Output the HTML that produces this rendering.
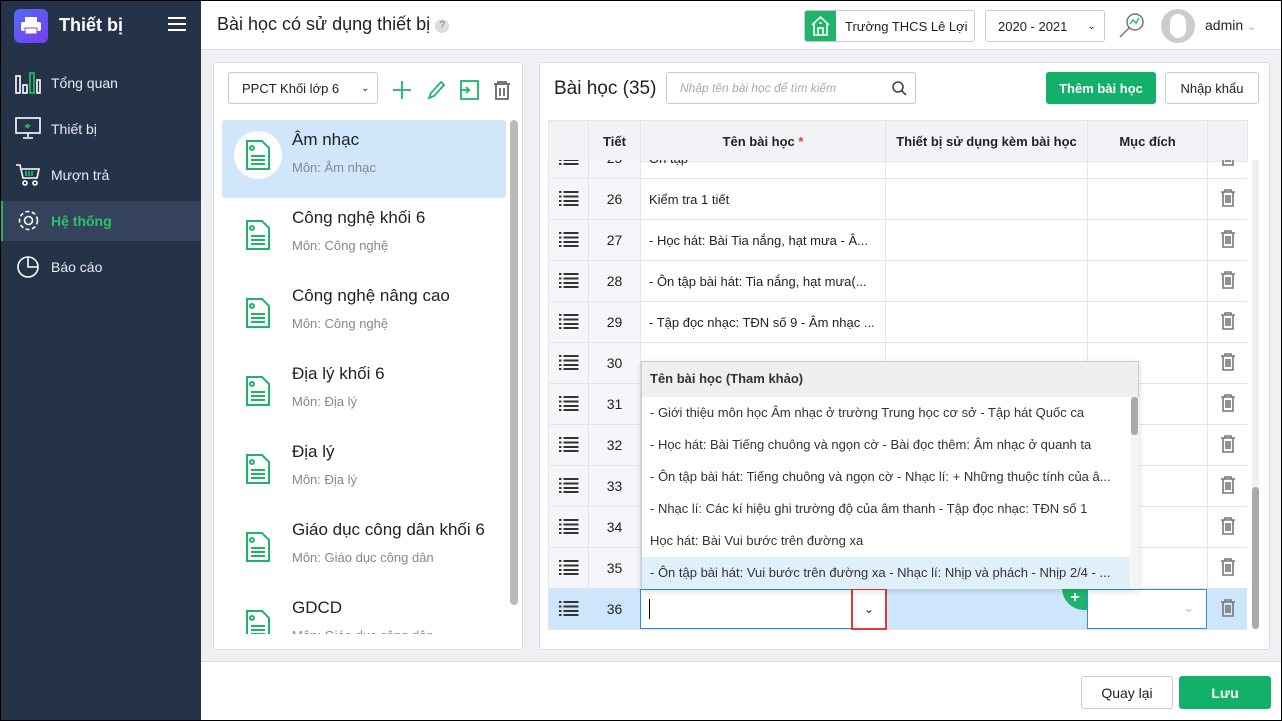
<!DOCTYPE html>
<html><head><meta charset="utf-8"><style>
*{box-sizing:border-box;margin:0;padding:0}
body{width:1282px;height:721px;overflow:hidden;font-family:"Liberation Sans",sans-serif;background:#eef0f4;position:relative;font-size:13px;color:#222}
.abs{position:absolute}
.side{left:0;top:0;width:201px;height:721px;background:#253349;color:#fff}
.mi{position:absolute;left:0;width:201px;height:40px;display:flex;align-items:center;padding-left:51px;font-size:14px;color:#e8ecf2}
.hdr{left:201px;top:0;width:1081px;height:50px;background:#fff;border-bottom:1px solid #ddd}
.panel{background:#fff;border:1px solid #d9dce2;border-radius:3px}
.btn{position:absolute;border:1px solid #c8cbd0;border-radius:3px;background:#fff;display:flex;align-items:center;justify-content:center;font-size:13px}
.li{position:absolute;left:222px;width:284px;height:78px}
.li .t{position:absolute;left:70px;top:10px;font-size:17px;color:#222}
.li .s{position:absolute;left:70px;top:40px;font-size:13px;color:#888}
.li svg{position:absolute;left:24px;top:22px}
table{border-collapse:collapse;position:absolute;left:548px;table-layout:fixed}
td{border:1px solid #e3e5ea;height:41px;font-size:13px;padding:0 8px;white-space:nowrap;overflow:hidden}
td.c1{background:#f5f6f9;text-align:center;padding:0}
td.c2{background:#f5f6f9;text-align:center;font-size:14px}
td.tr{text-align:center;padding:0}
.dd{left:641px;top:361px;width:498px;height:228px;background:#fff;border:1px solid #ccc;box-shadow:0 2px 6px rgba(0,0,0,.15)}
.dd div.it{height:32px;line-height:32px;padding-left:8px;font-size:13px;color:#333;white-space:nowrap;width:488px;overflow:hidden}
</style></head><body>
<svg width="0" height="0" style="position:absolute"><defs>
<symbol id="ls" viewBox="0 0 20 16"><g fill="#333"><rect x="0" y="1" width="2.5" height="2"/><rect x="4.5" y="1" width="15" height="2"/><rect x="0" y="5.5" width="2.5" height="2"/><rect x="4.5" y="5.5" width="15" height="2"/><rect x="0" y="10" width="2.5" height="2"/><rect x="4.5" y="10" width="15" height="2"/><rect x="0" y="14" width="2.5" height="2"/><rect x="4.5" y="14" width="15" height="2"/></g></symbol>
<symbol id="tr" viewBox="0 0 16 18"><g fill="none" stroke="#777" stroke-width="1.6"><path d="M1 3h14M5 3V1h6v2M3 3v14h10V3M6 6v8M8 6v8M10 6v8"/></g></symbol>
<symbol id="doc" viewBox="0 0 24 30"><g fill="none" stroke="#1fb46a" stroke-width="2"><path d="M1 1h15l7 7v21H1z"/><circle cx="6" cy="8" r="2"/><path d="M5 16h14M5 20h14M5 24h14"/></g></symbol>
</defs></svg>
<div class="abs side">
 <div class="abs" style="left:14px;top:9px;width:34px;height:34px;border-radius:6px;background:linear-gradient(135deg,#4f6cf5,#7a3cf0)"></div>
 <svg class="abs" style="left:20px;top:17px" width="22" height="18" viewBox="0 0 22 18"><rect x="5" y="0" width="12" height="5" fill="#fff"/><rect x="1" y="5" width="20" height="9" rx="2" fill="#fff"/><rect x="5" y="11" width="12" height="6" fill="#fff" stroke="#6a4cf2"/></svg>
 <div class="abs" style="left:59px;top:15px;font-size:18px;font-weight:bold">Thiết bị</div>
 <div class="abs" style="left:168px;top:17px;width:18px;height:2px;background:#fff;box-shadow:0 6px 0 #fff,0 12px 0 #fff"></div>
 <div class="mi" style="top:63px">Tổng quan</div>
 <div class="mi" style="top:109px">Thiết bị</div>
 <div class="mi" style="top:155px">Mượn trả</div>
 <div class="mi" style="top:201px;background:#34435b;font-weight:bold;color:#27c36d"><span class="abs" style="left:0;top:0;width:3px;height:40px;background:#1fb46a"></span>Hệ thống</div>
 <div class="mi" style="top:247px">Báo cáo</div>
 <svg class="abs" style="left:15px;top:72px" width="26" height="22" fill="none" stroke="#fff" stroke-width="1.6"><rect x="1" y="4" width="4" height="17"/><rect x="8" y="13" width="4" height="8"/><rect x="15" y="1" width="4" height="20" stroke="#27c36d"/><rect x="22" y="8" width="3" height="13"/></svg>
 <svg class="abs" style="left:15px;top:117px" width="26" height="22" fill="none" stroke="#fff" stroke-width="1.6"><rect x="1" y="1" width="24" height="15"/><path d="M13 16v4M8 21h10"/><path d="M10 10l3-3M12 11l3-3" stroke="#27c36d"/></svg>
 <svg class="abs" style="left:15px;top:163px" width="26" height="24" fill="none" stroke="#fff" stroke-width="1.6"><path d="M1 2h4l3 13h14l2-9H7"/><circle cx="10" cy="20" r="2"/><circle cx="20" cy="20" r="2"/><path d="M11 8v5M14 8v5M17 8v5" stroke="#27c36d"/></svg>
 <svg class="abs" style="left:16px;top:208px" width="25" height="25" fill="none" stroke="#fff" stroke-width="1.6"><circle cx="12.5" cy="12.5" r="4"/><circle cx="12.5" cy="12.5" r="9" stroke-dasharray="4 2.5"/></svg>
 <svg class="abs" style="left:16px;top:255px" width="24" height="24" fill="none" stroke="#fff" stroke-width="1.6"><circle cx="12" cy="12" r="10"/><path d="M12 2v10h10"/></svg>
</div>
<div class="abs hdr">
 <div class="abs" style="left:16px;top:14px;font-size:18px;color:#222">Bài học có sử dụng thiết bị <span style="display:inline-block;width:14px;height:14px;border-radius:7px;background:#ddd;color:#777;font-size:10px;text-align:center;line-height:14px;vertical-align:2px">?</span></div>
 <div class="btn" style="left:603px;top:10px;width:171px;height:32px;justify-content:flex-start;overflow:hidden"><div style="width:31px;height:30px;background:#1fb46a;position:relative"><svg style="position:absolute;left:6px;top:5px" width="19" height="20" fill="none" stroke="#fff" stroke-width="1.6"><path d="M1 9L9.5 1 18 9M3 7v12h13V7M7 19v-7h5v7M8 7h3"/></svg></div><span style="margin-left:9px;font-size:13px">Trường THCS Lê Lợi</span></div>
 <div class="btn" style="left:784px;top:10px;width:120px;height:32px;justify-content:flex-start;padding-left:12px">2020 - 2021<span style="margin-left:20px;font-size:10px">⌄</span></div>
 <svg class="abs" style="left:916px;top:11px" width="30" height="30" fill="none" stroke="#777" stroke-width="1.5"><circle cx="18" cy="11" r="8"/><path d="M12 17l-9 9"/><path d="M13 13l3-4 3 3 3-5" stroke="#27c36d"/></svg>
 <div class="abs" style="left:960px;top:9px;width:34px;height:34px;border-radius:17px;background:#ccc"><div style="margin:5px 9px;width:16px;height:24px;border-radius:8px;background:#fff"></div></div>
 <div class="abs" style="left:1004px;top:17px;font-size:14px">admin <span style="color:#aaa;font-size:11px">⌄</span></div>
</div>
<div class="abs panel" style="left:213px;top:62px;width:310px;height:588px"></div>
<div class="btn" style="left:228px;top:72px;width:150px;height:32px;justify-content:flex-start;padding-left:13px">PPCT Khối lớp 6<span style="margin-left:22px;font-size:10px">⌄</span></div>
<svg class="abs" style="left:392px;top:80px" width="120" height="20" fill="none" stroke-width="1.8"><path d="M10 1v18M1 10h18" stroke="#1fb46a"/><path d="M37 18l2-5 10-11 3 3-10 11z" stroke="#1fb46a"/><rect x="69" y="1" width="17" height="18" stroke="#1fb46a"/><path d="M69 10h8l-3-3M77 10l-3 3" stroke="#1fb46a"/><path d="M102 4h16M106 4V2h8v2M104 4v15h12V4M108 8v8M112 8v8" stroke="#666"/></svg>
<div class="abs" style="left:510px;top:120px;width:8px;height:485px;border-radius:4px;background:#bbb"></div>
<div class="li" style="top:120px;background:#cfe6fb;border-radius:3px"><div class="abs" style="left:12px;top:11px;width:48px;height:48px;border-radius:24px;background:#fff"></div><svg style="left:24px;top:20px" width="24" height="30"><use href="#doc"/></svg><div class="t">Âm nhạc</div><div class="s">Môn: Âm nhạc</div></div>
<div class="li" style="top:198px"><svg width="24" height="30"><use href="#doc"/></svg><div class="t">Công nghệ khối 6</div><div class="s">Môn: Công nghệ</div></div>
<div class="li" style="top:276px"><svg width="24" height="30"><use href="#doc"/></svg><div class="t">Công nghệ nâng cao</div><div class="s">Môn: Công nghệ</div></div>
<div class="li" style="top:354px"><svg width="24" height="30"><use href="#doc"/></svg><div class="t">Địa lý khối 6</div><div class="s">Môn: Địa lý</div></div>
<div class="li" style="top:432px"><svg width="24" height="30"><use href="#doc"/></svg><div class="t">Địa lý</div><div class="s">Môn: Địa lý</div></div>
<div class="li" style="top:510px"><svg width="24" height="30"><use href="#doc"/></svg><div class="t">Giáo dục công dân khối 6</div><div class="s">Môn: Giáo dục công dân</div></div>
<div class="li" style="top:588px;height:46px;overflow:hidden"><svg width="24" height="30"><use href="#doc"/></svg><div class="t">GDCD</div><div class="s">Môn: Giáo dục công dân</div></div>
<div class="abs panel" style="left:539px;top:62px;width:731px;height:588px"></div>
<div class="abs" style="left:554px;top:78px;font-size:19px">Bài học (35)</div>
<div class="btn" style="left:666px;top:72px;width:250px;height:32px;justify-content:flex-start;padding-left:13px;color:#aaa;font-style:italic;font-size:12px">Nhập tên bài học để tìm kiếm<svg style="position:absolute;right:8px;top:8px" width="15" height="15" fill="none" stroke="#444" stroke-width="1.6"><circle cx="6" cy="6" r="5"/><path d="M10 10l4 4"/></svg></div>
<div class="btn" style="left:1046px;top:72px;width:110px;height:32px;background:#13b06a;border-color:#13b06a;color:#fff;font-weight:bold">Thêm bài học</div>
<div class="btn" style="left:1165px;top:72px;width:94px;height:32px">Nhập khẩu</div>
<div class="abs" style="left:548px;top:120px;width:705px;height:510px;overflow:hidden">
<table style="left:0;top:0;width:699px">
<colgroup><col style="width:40px"><col style="width:52px"><col style="width:245px"><col style="width:202px"><col style="width:120px"><col style="width:40px"></colgroup>
<tr style="background:#f2f3f7;font-weight:bold"><td style="height:40px"></td><td style="text-align:center">Tiết</td><td style="text-align:center">Tên bài học <span style="color:#e33">*</span></td><td style="text-align:center">Thiết bị sử dụng kèm bài học</td><td style="text-align:center">Mục đích</td><td></td></tr>
</table>
<div class="abs" style="left:0;top:40px;width:699px;height:470px;overflow:hidden">
<table style="left:0;top:-23px;width:699px">
<colgroup><col style="width:40px"><col style="width:52px"><col style="width:245px"><col style="width:202px"><col style="width:120px"><col style="width:40px"></colgroup>
<tr><td class="c1"><svg width="20" height="16"><use href="#ls"/></svg></td><td class="c2">25</td><td>Ôn tập</td><td></td><td></td><td class="tr"><svg width="16" height="18"><use href="#tr"/></svg></td></tr>
<tr><td class="c1"><svg width="20" height="16"><use href="#ls"/></svg></td><td class="c2">26</td><td>Kiểm tra 1 tiết</td><td></td><td></td><td class="tr"><svg width="16" height="18"><use href="#tr"/></svg></td></tr>
<tr><td class="c1"><svg width="20" height="16"><use href="#ls"/></svg></td><td class="c2">27</td><td>- Học hát: Bài Tia nắng, hạt mưa - Â...</td><td></td><td></td><td class="tr"><svg width="16" height="18"><use href="#tr"/></svg></td></tr>
<tr><td class="c1"><svg width="20" height="16"><use href="#ls"/></svg></td><td class="c2">28</td><td>- Ôn tập bài hát: Tia nắng, hạt mưa(...</td><td></td><td></td><td class="tr"><svg width="16" height="18"><use href="#tr"/></svg></td></tr>
<tr><td class="c1"><svg width="20" height="16"><use href="#ls"/></svg></td><td class="c2">29</td><td>- Tập đọc nhạc: TĐN số 9 - Âm nhạc ...</td><td></td><td></td><td class="tr"><svg width="16" height="18"><use href="#tr"/></svg></td></tr>
<tr><td class="c1"><svg width="20" height="16"><use href="#ls"/></svg></td><td class="c2">30</td><td></td><td></td><td></td><td class="tr"><svg width="16" height="18"><use href="#tr"/></svg></td></tr>
<tr><td class="c1"><svg width="20" height="16"><use href="#ls"/></svg></td><td class="c2">31</td><td></td><td></td><td></td><td class="tr"><svg width="16" height="18"><use href="#tr"/></svg></td></tr>
<tr><td class="c1"><svg width="20" height="16"><use href="#ls"/></svg></td><td class="c2">32</td><td></td><td></td><td></td><td class="tr"><svg width="16" height="18"><use href="#tr"/></svg></td></tr>
<tr><td class="c1"><svg width="20" height="16"><use href="#ls"/></svg></td><td class="c2">33</td><td></td><td></td><td></td><td class="tr"><svg width="16" height="18"><use href="#tr"/></svg></td></tr>
<tr><td class="c1"><svg width="20" height="16"><use href="#ls"/></svg></td><td class="c2">34</td><td></td><td></td><td></td><td class="tr"><svg width="16" height="18"><use href="#tr"/></svg></td></tr>
<tr><td class="c1"><svg width="20" height="16"><use href="#ls"/></svg></td><td class="c2">35</td><td></td><td></td><td></td><td class="tr"><svg width="16" height="18"><use href="#tr"/></svg></td></tr>
<tr style="background:#cde6fb"><td class="c1" style="background:#cde6fb"><svg width="20" height="16"><use href="#ls"/></svg></td><td class="c2" style="background:#cde6fb">36</td><td></td><td></td><td></td><td class="tr"><svg width="16" height="18"><use href="#tr"/></svg></td></tr>
</table></div></div>
<div class="abs" style="left:1252px;top:160px;width:7px;height:470px;background:#f0f0f0"></div>
<div class="abs" style="left:1252px;top:487px;width:7px;height:142px;border-radius:4px;background:#aaa"></div>
<div class="abs" style="left:640px;top:589px;width:246px;height:40px;background:#fff;border:1px solid #2d8ce6"></div>
<div class="abs" style="left:649px;top:599px;width:1px;height:20px;background:#000"></div>
<div class="abs" style="left:851px;top:588px;width:36px;height:42px;border:2px solid #e53935;text-align:center;line-height:38px;font-size:12px">⌄</div>
<div class="abs" style="left:1062px;top:588px;width:26px;height:22px;border-radius:0 0 0 22px;background:#1fb46a;color:#fff;font-weight:bold;text-align:center;font-size:16px;line-height:20px">+</div>
<div class="abs" style="left:1087px;top:589px;width:120px;height:40px;background:#fff;border:1px solid #2d8ce6;color:#bbb;text-align:right;padding-right:12px;line-height:36px">⌄</div>
<div class="abs dd">
 <div style="height:35px;line-height:34px;background:#efefef;padding-left:8px;font-weight:bold;font-size:13px;color:#333">Tên bài học (Tham khảo)</div>
 <div class="it">- Giới thiệu môn học Âm nhạc ở trường Trung học cơ sở - Tập hát Quốc ca</div>
 <div class="it">- Học hát: Bài Tiếng chuông và ngọn cờ - Bài đọc thêm: Âm nhạc ở quanh ta</div>
 <div class="it">- Ôn tập bài hát: Tiếng chuông và ngọn cờ - Nhạc lí: + Những thuộc tính của â...</div>
 <div class="it">- Nhạc lí: Các kí hiệu ghi trường độ của âm thanh - Tập đọc nhạc: TĐN số 1</div>
 <div class="it">Học hát: Bài Vui bước trên đường xa</div>
 <div class="it" style="background:#dff0fb">- Ôn tập bài hát: Vui bước trên đường xa - Nhạc lí: Nhịp và phách - Nhịp 2/4 - ...</div>
 <div class="abs" style="left:489px;top:35px;width:8px;height:192px;background:#f4f4f4"></div>
 <div class="abs" style="left:489px;top:35px;width:7px;height:38px;border-radius:3px;background:#aaa"></div>
</div>
<div class="abs" style="left:201px;top:661px;width:1081px;height:60px;background:#fff;border-top:1px solid #ddd"></div>
<div class="btn" style="left:1081px;top:676px;width:92px;height:33px;font-size:14px">Quay lại</div>
<div class="btn" style="left:1179px;top:676px;width:92px;height:33px;background:#13b06a;border-color:#13b06a;color:#fff;font-weight:bold;font-size:14px">Lưu</div>
<div class="abs" style="left:0;top:0;width:1282px;height:721px;border:1px solid #000;pointer-events:none"></div>
</body></html>
